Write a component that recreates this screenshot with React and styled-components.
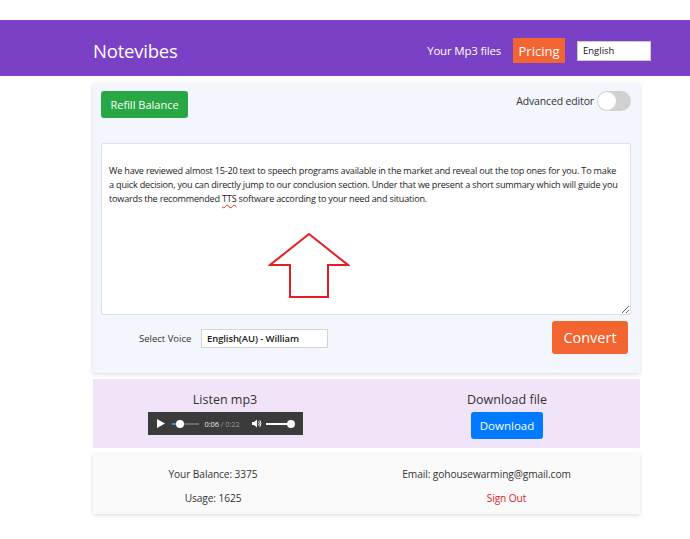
import React from "react";
import styled, { createGlobalStyle } from "styled-components";

const Global = createGlobalStyle`
  html, body { margin: 0; padding: 0; background: #fff; }
  body { font-family: "Open Sans", "Noto Sans", sans-serif; color: #212529; }
  * { box-sizing: border-box; }
`;

const Page = styled.div`
  padding: 20px 0 24px;
  width: 690px;
`;

const Header = styled.header`
  height: 56px;
  background: #7a40c5;
  display: flex;
  align-items: center;
  justify-content: space-between;
  padding: 5px 39px 0 93px;
`;

const Brand = styled.div`
  color: #fff;
  font-size: 18.5px;
  letter-spacing: -0.2px;
`;

const Nav = styled.nav`
  display: flex;
  align-items: center;
`;

const NavLink = styled.span`
  color: #fff;
  font-size: 11.5px;
  letter-spacing: -0.2px;
  margin-right: 12px;
`;

const PricingButton = styled.span`
  background: #f26530;
  color: #fff;
  font-size: 13px;
  height: 25px;
  width: 52px;
  display: flex;
  align-items: center;
  justify-content: center;
  margin-right: 12px;
`;

const LangSelect = styled.div`
  width: 74px;
  height: 20px;
  background: #fff;
  border: 1px solid #ccc;
  font-size: 9.5px;
  color: #111;
  display: flex;
  align-items: center;
  padding-left: 5px;
`;

const Main = styled.main`
  margin-left: 93px;
  width: 547px;
`;

const EditorCard = styled.section`
  margin-top: 8px;
  background: #f3f6fc;
  box-shadow: 0 1px 4px rgba(0, 0, 0, 0.16);
  padding: 7px 9px 19px 8px;
`;

const TopRow = styled.div`
  display: flex;
  justify-content: space-between;
  align-items: flex-start;
`;

const Button = styled.button`
  border: none;
  color: #fff;
  font-family: "Open Sans", sans-serif;
  background: ${(p) => p.$bg};
  font-size: ${(p) => p.$size || 12}px;
  height: ${(p) => p.$h}px;
  width: ${(p) => p.$w}px;
  border-radius: 3px;
  padding: 0;
  display: flex;
  align-items: center;
  justify-content: center;
`;

const AdvRow = styled.div`
  display: flex;
  align-items: center;
  font-size: 10.5px;
  color: #333;
  gap: 3px;
  letter-spacing: -0.15px;
`;

const Toggle = styled.div`
  width: 34px;
  height: 20px;
  border-radius: 10px;
  background: #d1d1d1;
  position: relative;
  &::after {
    content: "";
    position: absolute;
    left: 1px;
    top: 1px;
    width: 18px;
    height: 18px;
    border-radius: 50%;
    background: #fff;
  }
`;

const EditorWrap = styled.div`
  position: relative;
  margin-top: 25px;
`;

const TextBox = styled.div`
  width: 530px;
  height: 172px;
  background: #fff;
  border: 1px solid #dcdfe4;
  border-radius: 2px;
  padding: 20px 7px 8px 7px;
  font-size: 9.1px;
  line-height: 14px;
  color: #222;
  resize: both;
  overflow: auto;
  letter-spacing: -0.2px;
`;

const Misspelled = styled.span`
  text-decoration: underline wavy #e0301e;
  text-decoration-thickness: 1px;
  text-underline-offset: 2px;
`;

const Arrow = styled.svg`
  position: absolute;
  left: 167px;
  top: 89px;
  pointer-events: none;
`;

const BottomRow = styled.div`
  display: flex;
  align-items: center;
  margin-top: 6px;
  padding-right: 3px;
`;

const Label = styled.span`
  font-size: 9.5px;
  color: #333;
  margin-left: 38px;
  width: 62px;
  padding-top: 2px;
`;

const VoiceSelect = styled.div`
  width: 127px;
  height: 19px;
  margin-top: 2px;
  background: #fff;
  border: 1px solid #d4d4d4;
  font-size: 9.5px;
  font-weight: 600;
  color: #222;
  display: flex;
  align-items: center;
  padding-left: 5px;
  letter-spacing: -0.1px;
`;

const Spacer = styled.div`
  flex: 1;
`;

const ListenSection = styled.section`
  margin-top: 6px;
  height: 69px;
  background: #f1e4f9;
  display: grid;
  grid-template-columns: 264px 1fr;
  padding-top: 12px;
`;

const Column = styled.div`
  display: flex;
  flex-direction: column;
  align-items: center;
  padding-left: ${(p) => p.$shift || 0}px;
`;

const SectionTitle = styled.div`
  font-size: 12.5px;
  line-height: 18px;
  color: #333;
  margin-bottom: ${(p) => p.$mb}px;
`;

const Player = styled.div`
  width: 155px;
  height: 23px;
  background: #3b3b3b;
  display: flex;
  align-items: center;
  padding-left: 9px;
  color: #fff;
`;

const Track = styled.div`
  position: relative;
  width: ${(p) => p.$w}px;
  height: 2px;
  background: ${(p) => p.$bg};
  margin-left: ${(p) => p.$ml}px;
`;

const Fill = styled.div`
  position: absolute;
  left: 0;
  top: 0;
  height: 2px;
  background: ${(p) => p.$bg};
`;

const Knob = styled.div`
  position: absolute;
  top: -3px;
  width: 8px;
  height: 8px;
  margin-left: -4px;
  border-radius: 50%;
  background: #fff;
`;

const Time = styled.span`
  font-size: 7.5px;
  margin-left: 6px;
  color: #e8e8e8;
  letter-spacing: -0.1px;
  & > span { color: #9a9a9a; }
`;

const InfoCard = styled.section`
  margin-top: 6px;
  background: #fafafa;
  box-shadow: 0 1px 4px rgba(0, 0, 0, 0.16);
  display: grid;
  grid-template-columns: 240px 1fr;
  grid-auto-rows: 24px;
  padding: 8px 0 4px;
  font-size: 10.2px;
  color: #333;
  letter-spacing: -0.1px;
`;

const InfoCell = styled.div`
  display: flex;
  align-items: center;
  justify-content: center;
  padding-left: ${(p) => p.$shift || 0}px;
  color: ${(p) => p.$color || "#333"};
`;

export default function App() {
  const progress = 30;
  return (
    <>
      <Global />
      <Page>
        <Header>
          <Brand>Notevibes</Brand>
          <Nav>
            <NavLink>Your Mp3 files</NavLink>
            <PricingButton>Pricing</PricingButton>
            <LangSelect>English</LangSelect>
          </Nav>
        </Header>
        <Main>
          <EditorCard>
            <TopRow>
              <Button $bg="#28a745" $w={87} $h={27} $size={11}>
                Refill Balance
              </Button>
              <AdvRow>
                Advanced editor
                <Toggle />
              </AdvRow>
            </TopRow>
            <EditorWrap>
              <TextBox>
                We have reviewed almost 15-20 text to speech programs available in the market and reveal out the top ones for you. To make a quick decision, you can directly jump to our conclusion section. Under that we present a short summary which will guide you towards the recommended <Misspelled>TTS</Misspelled> software according to your need and situation.
              </TextBox>
              <Arrow width="82" height="68" viewBox="0 0 82 68">
                <polygon
                  points="41,2 2,33 22,33 22,65 60,65 60,33 80,33"
                  fill="none"
                  stroke="#e31e25"
                  strokeWidth="2"
                />
              </Arrow>
            </EditorWrap>
            <BottomRow>
              <Label>Select Voice</Label>
              <VoiceSelect>English(AU) - William</VoiceSelect>
              <Spacer />
              <Button $bg="#f26530" $w={76} $h={33} $size={14.5}>
                Convert
              </Button>
            </BottomRow>
          </EditorCard>

          <ListenSection>
            <Column>
              <SectionTitle $mb={3}>Listen mp3</SectionTitle>
              <Player>
                <svg width="8" height="9" viewBox="0 0 8 9">
                  <polygon points="0,0 8,4.5 0,9" fill="#fff" />
                </svg>
                <Track $w={27} $bg="#6b6b6b" $ml={7}>
                  <Fill $bg="#3b8de0" style={{ width: `${progress}%` }} />
                  <Knob style={{ left: `${progress}%` }} />
                </Track>
                <Time>
                  0:06 <span>/ 0:22</span>
                </Time>
                <svg width="10" height="9" viewBox="0 0 10 9" style={{ marginLeft: 12 }}>
                  <polygon points="0,3 2,3 5,0.5 5,8.5 2,6 0,6" fill="#fff" />
                  <path d="M6.5 2.5 Q8 4.5 6.5 6.5" stroke="#fff" strokeWidth="1" fill="none" />
                  <path d="M7.8 1.2 Q10 4.5 7.8 7.8" stroke="#fff" strokeWidth="1" fill="none" />
                </svg>
                <Track $w={25} $bg="#fff" $ml={4}>
                  <Knob style={{ left: "100%" }} />
                </Track>
              </Player>
            </Column>
            <Column $shift={17}>
              <SectionTitle $mb={3}>Download file</SectionTitle>
              <Button $bg="#007bff" $w={72} $h={27} $size={11.5}>
                Download
              </Button>
            </Column>
          </ListenSection>

          <InfoCard>
            <InfoCell>Your Balance: 3375</InfoCell>
            <InfoCell>Email: gohousewarming@gmail.com</InfoCell>
            <InfoCell>Usage: 1625</InfoCell>
            <InfoCell $shift={40} $color="#e02424">Sign Out</InfoCell>
          </InfoCard>
        </Main>
      </Page>
    </>
  );
}
